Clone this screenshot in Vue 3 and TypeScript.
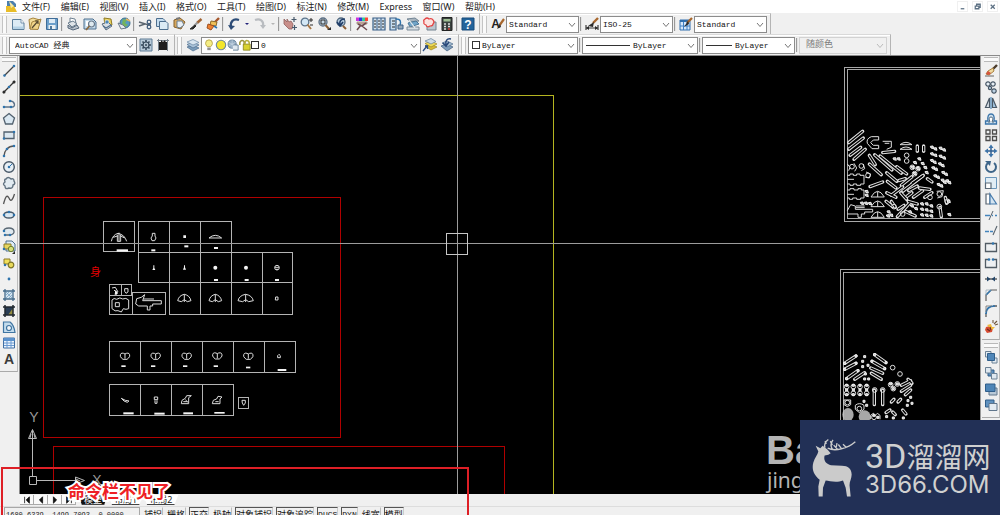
<script setup lang="ts">
type Shape = [d: string, fill: string, stroke?: string, width?: number]
interface Glyph { p: Shape[]; t?: { s: string; x: number; y: number; size: number; fill: string } }
type Seg = [number, number, number, number]

const N = 'none'
const K = '#2b2b2b'
const B = '#2f74ad'
const L = '#c4dcef'
const S = '#4d6e8e'
const G = '#6c7f8f'

const dot = (x: number, y: number, r = 1.3) => `M${x - r} ${y}a${r} ${r} 0 1 0 ${2 * r} 0a${r} ${r} 0 1 0 ${-2 * r} 0z`

const glyphs: Record<string, Glyph> = {
  new: { p: [['M2.5 3.500H11L14 7V13.500H2.500z', '#dcebf5', '#5d7f9c'], ['M11 3.500V7H14', '#fff', '#5d7f9c', 0.8], ['M3 10.500H13.500V13H3z', '#b5d2e6']] },
  open: { p: [['M2 3.500L6 2L13 4L11 13L3 13z', '#f2dc9a', '#a8853a'], ['M5 6L14 3L11 13.500L3 13z', '#f0d48a', '#94722e', 0.8], ['M5 12L11 5M8 5H11V8', N, '#574a31', 1.2]] },
  save: { p: [['M2.500 2.500H13.500V13.500H2.500z', '#6b9fcb', '#3f6d98'], ['M5 3H11V7H5z', '#dceaf5'], ['M4.500 9H11.500V13H4.500z', '#e9eff3'], ['M6 10H8V13H6z', '#4d789d']] },
  plot: { p: [['M5 2L10 3L11 7L5 6z', '#fff', G], ['M3 7L8 5L12 8L7 11z', '#dfe4e8', G], ['M3 9L7 12L12 9L14 12L8 14L3 12z', '#b8c1ca', '#54667a']] },
  preview: { p: [['M2 3H11L14 6V13H2z', '#c5dced', S], ['M4 5H9V10H4z', '#fff'], ['M9.500 8m-3 0a3 3 0 1 0 6 0a3 3 0 1 0-6 0', '#dfeaf0', '#67788a', 1.2], ['M7.500 10L4 14', N, '#8a6a42', 1.8]] },
  publish: { p: [['M5 2L12 3L13 9L6 10z', '#e9d15b', '#8f7a25'], ['M3 8L9 6L13 10L7 14z', '#d7dde2', '#5b6d7f'], ['M4 10L7 12L12 9', N, '#4c6d8d', 1.2], [dot(8, 6, 2), '#4b85b8', '#fff', 0.5]] },
  web: { p: [[dot(9, 7, 5), '#5599c4', '#40708e'], ['M7 3L11 4L9 7L12 9L9 11L6 8z', '#74b35e'], ['M2 7L7 9L10 12L5 13z', '#e4e9ed', '#6c7988'], ['M10 3L14 5', N, '#eab65d', 1.5]] },
  cut: { p: [['M2 6L10 8.500L14 8M2 10L8 8', N, '#5a6570', 1.4], [dot(12, 6, 1.8), N, '#3c597a', 1.2], [dot(12, 11, 1.8), N, '#3c597a', 1.2]] },
  copy: { p: [['M2.500 2.500H9L11 4.500V10.500H2.500z', L, S], ['M5.500 5.500H12L14 7.500V13.500H5.500z', '#dcebf5', S]] },
  paste: { p: [['M3 4L9 2L14 6L10 13L3 11z', '#d7a75c', '#84602c'], ['M6 5L11 5L13 9L9 12L6 11z', '#e8eff5', '#6b7e90'], ['M5 3L9 2', N, '#777', 2]] },
  brush: { p: [['M13.500 3L9 7', N, '#a06332', 2.4], ['M9.500 6.500L6 10', N, '#999', 2.2], ['M7 9L2 13L5 13L8 10z', K, K]] },
  match: { p: [['M14 2L10 6', N, '#a5562b', 2.4], ['M6 5L12 6L11 10L5 9z', '#f0c058', '#8d6a2a'], ['M3 8L9 10L6 14L2 12z', '#ee8130', '#9d4f20'], ['M9 10L12 12', N, B, 1.6]] },
  undo: { p: [['M13 4C7 2 4 6 5 11', N, '#2d4c77', 2.2], ['M2 9L9 10L5 14z', '#2d4c77']] },
  redo: { p: [['M3 4C8 2 12 5 11 10', N, '#b9bcc0', 2.2], ['M8 9L14 9L11 13z', '#b9bcc0']] },
  pan: { p: [['M2 3L5 6L5 3L7 6L9 5L11 8L10 13L7 13L2 8z', '#c98f8a', '#91605d', 0.8], ['M12 1V6M9.500 3.500H14.500M12.500 9V14M10 11.500H15', N, '#47596b', 1.2]] },
  zoomrt: { p: [[dot(6, 6, 3.8), '#d3e7f5', '#5b738a', 1.3], ['M8.500 8.500L12 13', N, '#a77947', 2], ['M12 2V6M10 4H14M11 9H14', N, K, 1]] },
  zoomwin: { p: [[dot(7, 6, 4), '#c6d9e8', '#5c6f83', 1.3], ['M5 4H9V8H5z', N, K, 1], ['M9.500 9L13 13', N, '#8b5f36', 2], ['M11 14L15 11V14z', K]] },
  zoomprev: { p: [[dot(8, 6, 4), '#b6cbdd', '#51687e', 1.3], ['M10 10L13 13', N, '#8b5f36', 2], ['M12 3C8 3 6 5 7 9M4 6L7 10L10 6', N, '#1f3c68', 1.6]] },
  props: { p: [['M2 1.500H5V5H2z', '#c3d'], ['M5 1.500H8V5H5z', '#33d'], ['M8 1.500H11V5H8z', '#3c9'], ['M11 1.500H14V5H11z', '#f43'], ['M3 6H13V8H3z', '#d6b6a6', '#8c7a6d', 0.7], ['M4 8L8 10L12 7M8 10L13 14M3 14L7 9', N, '#6e4d50', 1.6]] },
  design: { p: [['M2 2H14V14H2z', '#d3e1ec', '#385f87', 1.2], ['M6 2V14M10 2V14', N, '#385f87', 1], ['M11 5H13M11 8H13M11 11H13M7 5H9M7 8H9M7 11H9M3 5H5M3 8H5M3 11H5', N, K, 1.2]] },
  palettes: { p: [['M2 2H8V14H2z', '#c7ddef', '#385f87', 1.2], ['M4 5H7M4 8H7M4 11H7', N, K, 1.2], ['M8 3C13 3 13 6 12 9', N, B, 1.4], ['M10 9H15V13H10z', '#94a7b7', '#385f87']] },
  sheets: { p: [['M2 3L10 2L14 5L6 6z', '#a9b4bd', '#728595'], ['M3 7L11 5L14 8L5 11z', '#71a5c9', '#4a7798'], ['M2 11H14V14H2z', '#d5dde3', '#7d8b98'], ['M4 4L10 12', N, '#e6ecef', 1.2]] },
  markup: { p: [['M5 6H14V14H5z', '#bac6cf', '#72818f'], ['M3 3q2-2 4 0q3-1 4 1q2 2 0 4q0 2-3 2q-3 2-4-1q-3-1-2-3q-1-2 1-3z', '#fbe3e0', '#e34242', 1.2]] },
  calc: { p: [['M3 1.500H13V14.500H3z', '#39413e', '#222'], ['M4.500 3H11.500V5.500H4.500z', '#9fbf94'], ['M5 8H7M9 8H11M5 10.500H7M9 10.500H11M5 13H7', N, '#dedede', 1.3], ['M9 13H11', N, '#db3d34', 1.3]] },
  help: { p: [['M2 2H14V14H2z', '#23649b', '#184b7a']], t: { s: '?', x: 8, y: 12.5, size: 12, fill: '#fff' } },
  textstyle: { p: [['M14 3L9 10', N, '#a8672d', 2.2], ['M10 8L7 13L11 11z', K]], t: { s: 'A', x: 5.500, y: 12, size: 12, fill: '#222' } },
  dimstyle: { p: [['M14 2L9 7', N, '#a8672d', 2.4], ['M10 6L4 10L9 11z', K], ['M2 9V14M14 9V14M2 12H14', N, '#3a3a3a', 1.2], ['M2 12L5 10V14zM14 12L11 10V14z', K]] },
  tablestyle: { p: [['M2 4H12V14H2z', '#d5e7fa', '#316fae'], ['M2 4H12V6H2z', '#316fae'], ['M5.500 6V14M9 6V14M2 10H12', N, '#3f80c6', 1], ['M14 2L9 7', N, '#a8672d', 2.3], ['M10 5L6 11L11 8z', K]] },
  gear: { p: [['M2 2H14V14H2z', '#b9cbd9', '#5f7d96', 1], ['M8 3V13M3 8H13M4.500 4.500L11.500 11.500M11.500 4.500L4.500 11.500', N, '#35485a', 1.6], [dot(8, 8, 3), '#b5c5d2', '#35485a', 1.2], [dot(8, 8, 1), '#35485a']] },
  myspace: { p: [['M4 5H12V13H4z', '#1f1f1f'], ['M2 3.500H14M3.500 2V14M12.500 2V14', N, '#77828c', 1], ['M6 6L6 3L8 5L10 3L11 6z', '#1f1f1f']] },
  layers: { p: [['M2 10L8 8L14 11L8 14z', '#7b9dbb', '#4a6c8d', 0.7], ['M2 7.500L8 5L14 8L8 11z', '#a9c2d8', '#4a6c8d', 0.7], ['M2 5L8 2.500L14 5.500L8 8z', '#d9e6f0', '#6b8aa6', 0.7]] },
  current: { p: [['M3 9L9 7L15 10L9 13z', '#d8bc33', '#9a8524', 0.7], ['M3 6.500L9 4L15 7L9 10z', '#efdb57', '#9a8524', 0.7], ['M3 4L9 1.500L14 4.500L9 7z', '#cedbe6', '#667f96', 0.7], ['M1 14L5 9M3 9H5.500V12', N, '#294d84', 1.3]] },
  prevlayer: { p: [['M2 9L8 7L14 10L8 14z', '#7f9dbb', '#3d5c7c', 0.7], ['M3 6L8 4L14 7L8 10z', '#a8bfd3', '#4a6c8d', 0.7], ['M12 2C8 1 6 4 7 8M4 6L7 9L10 5', N, '#29497a', 1.5]] },
  bulb: { p: [['M4 6a4 4 0 1 1 8 0q0 2-2 4H6Q4 8 4 6z', '#f5ed84', '#b3a044'], ['M6 11H10V14H6z', '#929292']] },
  sun: { p: [[dot(8, 8, 5.500), '#f3e62c', '#6f8a9b', 1.3], ['M3 3L4 4M12 12L13 13M13 3L12 4M4 12L3 13', N, '#b7a541', 1]] },
  freeze: { p: [[dot(7, 7, 4.800), '#93abc0', '#627f99'], ['M8 8H14V14H8', '#dfe8ef', '#5e7a92'], ['M7 2V12M3 5L11 9M11 5L3 9', N, '#c8d7e4', 0.8]] },
  lock: { p: [['M2 8V5Q4 1 7 4V9', N, '#9c9640', 1.8], ['M6 7H14V14H6z', '#d9d22e', '#8d8620'], ['M8 7Q8 2 11 3Q13 3 13 7', N, '#b5ad3a', 1.8]] },
  line: { p: [['M3 13L13 3', N, '#444', 1.3], [dot(3.500, 12.500), B], [dot(13, 3), B]] },
  xline: { p: [['M2 14L14 2', N, '#333', 1.300], [dot(3, 13, 1.500), K], [dot(13, 3, 1.500), K], [dot(8, 8), B]] },
  pline: { p: [['M3 12H11C15 12 14 6 9 6', N, '#5b7188', 1.4], [dot(3, 12), B], [dot(10, 12), B], [dot(9, 6), B]] },
  polygon: { p: [['M8 2.500L13.500 7L11.500 13H4.500L2.500 7z', '#dae8f2', '#52616f', 1.3]] },
  rect: { p: [['M3 5H13V11.500H3z', '#dbe7f0', '#52616f', 1.3], [dot(3, 11.500), B], [dot(13, 5), B]] },
  arc: { p: [['M3 13C3 8 7 3 13 3', N, '#555', 1.3], [dot(3, 13), B], [dot(6, 6), B], [dot(13, 3), B]] },
  circle: { p: [[dot(8, 8, 5.300), '#e7eff5', '#495968', 1.4], ['M8 8L11 5', N, B, 1], [dot(8, 8), B]] },
  cloud: { p: [['M5 4q2-3 5 0q3-1 3 2q2 3-1 4q0 4-4 3q-4 2-4-2q-3-2 0-4q-1-3 1-3z', '#e2ebf1', '#60717f', 1.4]] },
  spline: { p: [['M2.500 13C5 4 6 4 8 7C10 12 12 8 13.500 3', N, '#555', 1.3]] },
  ellipse: { p: [['M3 8C3 4 13 4 13 8C13 12 3 12 3 8z', '#d9e7f1', '#4a5b6b', 1.3], [dot(3, 8), B], [dot(13, 8), B], [dot(8, 5), B]] },
  earc: { p: [['M5 12H9C15 11 14 5 8 5C4 5 3 7 3 8', '#e0e9ef', '#5b6974', 1.3], [dot(4, 12), B], [dot(9, 12), B], [dot(3, 8), B]] },
  insert: { p: [['M5 2H11L14 5V12H5z', '#dcebf5', S], ['M3 5H10V10H3z', '#e7d65e', '#8a7b26'], [dot(10, 10, 2.700), '#d5df78', '#6d7f30'], ['M14 15L11 15L14 12z', K], [dot(3, 10), B]] },
  block: { p: [['M3 4H9V9H3z', '#f0df5a', '#8a7b26'], [dot(10, 10, 2.800), '#e8d95a', '#7c7529', 1.2], [dot(4, 10), B]] },
  point: { p: [[dot(8, 8, 1.400), B]] },
  hatch: { p: [['M4 4H12V12H4z', '#d5e4ef'], ['M4 2V14M12 2V14M2 4H14M2 12H14', N, '#456c8c', 1.3], ['M5 11L11 5M5 8L8 5M8 11L11 8M5 5L11 11', N, '#74a1c4', 0.800]] },
  gradient: { p: [['M4 4H12V12H4z', '#293d55'], ['M7 12L12 5V12z', '#938c40'], ['M4 2V14M12 2V14M2 4H14M2 12H14', N, '#20282f', 1.5]] },
  region: { p: [['M2.500 13.500V3H9Q13 6 14 13.500z', '#c3dced', '#3f75a2', 1.2], [dot(8, 9, 2.500), '#f0f5f9', '#3f75a2', 1.2]] },
  table: { p: [['M2.500 3H13.500V13H2.500z', '#edf5fd', '#416fa3'], ['M2.500 3H13.500V6H2.500z', '#5b92cd'], ['M6 6V13M10 6V13M3 8H13M3 10.500H13', N, '#6a9ad2', 1]] },
  mtext: { p: [], t: { s: 'A', x: 8, y: 13, size: 14, fill: '#3b3b3b' } },
  erase: { p: [['M2 13H11', N, '#666', 1], ['M14 2L10 6', N, '#4a3b2a', 2.400], ['M10 5L5 8L3 11L6 12L11 8z', '#f0d9a0', '#a8803d'], ['M5 8L8 10L6 12L3 11z', '#d6533d']] },
  copyobj: { p: [[dot(5, 5, 2.200), '#e6eef4', '#445362', 1.200], [dot(10, 5, 2.200), '#e6eef4', '#445362', 1.200], [dot(11, 12, 2.200), '#bcd2e4', '#445362', 1.200], [dot(7, 9, 1.600), '#bcd2e4', '#445362', 1.200]] },
  mirror: { p: [['M6.500 3V12.500H2.500z', '#dbe3e9', '#4b5966', 1.200], ['M9.500 3V12.500H13.500z', '#a7c9e4', '#4b5966', 1.200], ['M8 2V14', N, B, 1]] },
  offset: { p: [['M2.500 13V10H5Q4 3 8 3Q12 3 11 10H13.500V13z', '#cfe1ef', '#3a74a9', 1.300], ['M5 11H7Q5 6 8 6Q11 6 9 11H11', '#fff', '#53697d', 1]] },
  array: { p: [['M3 3H7V7H3zM9.500 3H13.500V7H9.500zM3 9.500H7V13.500H3zM9.500 9.500H13.500V13.500H9.500z', '#eef1f3', '#4c4c4c', 1.300]] },
  move: { p: [['M8 3V13M3 8H13', N, '#315f91', 1.500], ['M8 1.500L10.500 5H5.500zM8 14.500L10.500 11H5.500zM1.500 8L5 5.500V10.500zM14.500 8L11 5.500V10.500z', '#3d73a8']] },
  rotate: { p: [['M5 4A5 5 0 1 0 11 4', N, '#3e6589', 2], ['M2 2L8 2L7 7z', '#3e6589']] },
  scale: { p: [['M2.500 2.500H13.500V13.500H2.500z', '#e1edf5', '#6a96bb'], ['M2.500 8H8V13.500H2.500z', '#fff', '#5b6a78', 1.200]] },
  stretch: { p: [['M3 3H7V13H3z', '#fff', '#5a6672', 1.200], ['M7 3L13.500 13H7z', '#d4e4f1', '#487cad', 1.200]] },
  trim: { p: [['M2 8.500H7M9 8.500H10M12 8.500H14', N, '#4485bd', 1.300], ['M6 13L10 4', N, '#59646e', 1]] },
  extend: { p: [['M2 8.500H6M7 8.500H10', N, '#4485bd', 1.300], ['M10 12L14 3', N, '#59646e', 1.100]] },
  breakpt: { p: [['M2.500 4.500H13.500V12.500H2.500z', '#eef0f2', '#525c65', 1.300], [dot(10, 4.500), B]] },
  break: { p: [['M5.500 4.500H2.500V12.500H13.500V4.500H10.500', '#eef0f2', '#525c65', 1.300], [dot(6, 4.500), B], [dot(10, 4.500), B]] },
  join: { p: [['M2 8H14', N, '#404040', 1.200], ['M4 5.500L7.500 8L4 10.500zM12 5.500L8.500 8L12 10.500z', '#264769']] },
  chamfer: { p: [['M3 14V8L8 3H14', N, '#5b5b5b', 1.200], ['M3 8L8 3', N, B, 1.500], ['M3 8V3H8', N, '#9aa8b4', 0.800]] },
  fillet: { p: [['M3 14V10M10 3H14', N, '#5b5b5b', 1.300], ['M3 11Q3 3 12 3', N, B, 1.700], ['M3 9V3H9', N, '#777', 0.900]] },
  explode: { p: [['M3 8L7 7L10 9L9 13L4 14L2 11z', '#d84b31'], ['M4 6L8 5L9 8L12 8L9 11z', '#f0ba3c'], ['M11 5L14 2M12 6L15 5M10 4L10 1', N, '#71583f', 1.100], ['M4 10L7 12M7 8L8 11', N, '#702a22', 1.200]] },
  front: { p: [['M2.500 2.500H8V8H2.500z', '#e3ebf2', '#6b8195'], ['M9 9H14V14H9z', '#e3ebf2', '#6b8195'], ['M4.500 4.500H11.500V11.500H4.500z', '#4f86b8', '#305e8a']] },
  back: { p: [['M5 5H11V11H5z', '#5c8ebd', '#305e8a'], ['M2.500 2.500H8V8H2.500z', '#dfe8f0', '#6b8195'], ['M8.500 8.500H14V14H8.500z', '#dfe8f0', '#6b8195']] },
  above: { p: [['M6 7H14V14H6z', '#b9c9d7', '#60768c'], ['M2.500 3H12V10.500H2.500z', '#4e85b7', '#305e8a']] },
  below: { p: [['M2.500 3H11V10H2.500z', '#5f91bf', '#305e8a'], ['M6 6.500H14V13.500H6z', '#e4ecf3', '#60768c']] }
}

const menus = ['文件(F)', '编辑(E)', '视图(V)', '插入(I)', '格式(O)', '工具(T)', '绘图(D)', '标注(N)', '修改(M)', 'Express', '窗口(W)', '帮助(H)']
const standard = [
  'new|新建', 'open|打开', 'save|保存', '-', 'plot|打印', 'preview|打印预览', 'publish|发布', 'web|3DDWF', '-',
  'cut|剪切', 'copy|复制', 'paste|粘贴', 'brush|特性匹配', 'match|块编辑器', '-', 'undo|放弃', 'v|放弃列表', 'redo|重做', 'w|重做列表', '-',
  'pan|实时平移', 'zoomrt|实时缩放', 'zoomwin|窗口缩放', 'zoomprev|缩放上一个', '-', 'props|特性', 'design|设计中心', 'palettes|工具选项板', 'sheets|图纸集', 'markup|标记集', 'calc|计算器', '-', 'help|帮助'
].map(s => { const [icon, label] = s.split('|'); return { icon, label } })
const styles = [
  { icon: 'textstyle', label: '文字样式', value: 'Standard' },
  { icon: 'dimstyle', label: '标注样式', value: 'ISO-25' },
  { icon: 'tablestyle', label: '表格样式', value: 'Standard' }
]
const layerState = ['bulb', 'sun', 'freeze', 'lock']
const toItems = (s: string) => s.split(' ').map(p => { const [icon, label] = p.split('|'); return { icon, label } })
const draw = toItems('line|直线 xline|构造线 pline|多段线 polygon|多边形 rect|矩形 arc|圆弧 circle|圆 cloud|修订云线 spline|样条曲线 ellipse|椭圆 earc|椭圆弧 insert|插入块 block|创建块 point|点 hatch|图案填充 gradient|渐变色 region|面域 table|表格 mtext|多行文字')
const modify = toItems('erase|删除 copyobj|复制 mirror|镜像 offset|偏移 array|阵列 move|移动 rotate|旋转 scale|缩放 stretch|拉伸 trim|修剪 extend|延伸 breakpt|打断于点 break|打断 join|合并 chamfer|倒角 fillet|圆角 explode|分解')
const order = toItems('front|前置 back|后置 above|置于对象之上 below|置于对象之下')
const nav = [
  { label: '第一个', d: 'M3 1V9M9 1L5 5L9 9z' },
  { label: '上一个', d: 'M8 1L4 5L8 9z' },
  { label: '下一个', d: 'M4 1L8 5L4 9z' },
  { label: '最后一个', d: 'M3 1L7 5L3 9zM9 1V9' }
]
const tabs = ['模型', '布局1', '布局2']
const modes = [
  { t: '捕捉', on: false }, { t: '栅格', on: false }, { t: '正交', on: true }, { t: '极轴', on: false }, { t: '对象捕捉', on: true },
  { t: '对象追踪', on: true }, { t: 'DUCS', on: true }, { t: 'DYN', on: true }, { t: '线宽', on: false }, { t: '模型', on: true }
]

const sheets: Seg[] = [
  [103, 221, 31, 30], [138, 221, 31, 31], [169, 221, 31, 31], [200, 221, 31, 31],
  [138, 252, 31, 30], [169, 252, 31, 30], [200, 252, 31, 30], [231, 252, 31, 30], [262, 252, 30, 30],
  [169, 282, 31, 32], [200, 282, 31, 32], [231, 282, 31, 32], [262, 282, 30, 32],
  [109, 284, 12, 11], [121, 284, 10, 11], [109, 295, 23, 19], [132, 292, 33, 22],
  [109, 341, 31, 31], [140, 341, 31, 31], [171, 341, 31, 31], [202, 341, 31, 31], [233, 341, 31, 31], [264, 341, 31, 31],
  [109, 384, 31, 31], [140, 384, 31, 31], [171, 384, 31, 31], [202, 384, 31, 31], [238, 397, 10, 11]
]
const fans = [[283, 265, 20], [376, 265, 19], [467, 265, 23]]
const masks = [[105, 94], [197, 94], [290, 94], [382, 93], [475, 94]]
const labelsTop: Seg[] = [[80, 118, 34, 7], [184, 118, 12, 6], [283, 106, 12, 6], [372, 111, 12, 6], [372, 207, 12, 6], [464, 207, 12, 6], [555, 207, 12, 6]]
const labelsLow: Seg[] = [[94, 121, 13, 5], [183, 121, 13, 5], [279, 121, 13, 5], [371, 121, 13, 5], [468, 125, 13, 5], [563, 132, 26, 6], [100, 262, 31, 6], [193, 263, 31, 6], [280, 262, 29, 6], [373, 261, 31, 5]]

const rodsA: Seg[] = [
  [56, 248, 98, 214], [56, 268, 100, 234], [60, 286, 92, 262], [72, 298, 106, 268], [118, 286, 136, 314], [134, 284, 186, 330], [118, 312, 154, 344], [150, 288, 214, 340],
  [170, 338, 200, 364], [200, 320, 230, 342], [158, 278, 194, 274], [172, 364, 198, 384], [214, 376, 246, 350], [218, 394, 280, 346], [246, 370, 278, 348],
  [120, 380, 158, 366], [184, 406, 218, 380], [202, 470, 240, 428], [184, 424, 196, 442], [212, 398, 230, 418], [234, 424, 262, 432], [226, 454, 256, 468],
  [250, 412, 278, 392], [268, 384, 300, 388], [284, 412, 306, 398], [262, 258, 262, 274], [281, 258, 281, 274], [292, 356, 306, 366], [330, 442, 334, 470], [346, 412, 350, 430],
  [170, 398, 198, 412], [206, 362, 226, 356], [236, 392, 262, 378], [168, 424, 188, 440], [230, 410, 246, 398], [204, 448, 222, 436]
]
const blobsA = [
  [306, 262], [316, 267], [332, 265], [342, 270], [306, 282], [316, 286], [332, 289], [342, 294], [306, 302], [314, 307], [330, 312], [338, 317],
  [310, 324], [318, 328], [340, 338], [348, 343], [316, 348], [324, 352], [338, 361], [344, 367], [352, 363], [358, 368], [326, 374], [334, 378],
  [194, 297], [206, 297], [255, 308], [268, 297], [247, 322], [264, 326], [278, 311], [286, 323], [254, 341], [290, 338],
  [276, 432], [290, 432], [304, 438], [276, 448], [290, 450], [304, 454], [276, 465], [290, 466], [304, 468], [246, 438], [258, 446], [240, 456],
  [96, 430], [108, 430], [120, 431], [176, 456], [184, 466], [174, 468], [110, 395], [110, 406], [358, 464], [356, 424]
]
const ringsA = [[230, 286], [230, 303], [66, 320], [94, 318], [114, 346], [192, 440], [328, 402], [328, 440], [352, 424], [300, 412], [247, 322], [264, 326], [254, 341], [218, 462]]
const bowsA = [[143, 405], [143, 434], [143, 466]]
const rodsB: Seg[] = [
  [44, 910, 78, 888], [44, 928, 78, 910], [50, 956, 84, 932], [74, 958, 104, 938], [134, 884, 168, 908], [126, 904, 164, 926], [122, 924, 158, 940], [124, 940, 154, 958],
  [133, 990, 133, 1034], [158, 990, 158, 1034], [214, 976, 242, 962], [214, 994, 242, 976], [226, 1004, 242, 990], [168, 1058, 180, 1050], [184, 1026, 192, 1018], [204, 1026, 212, 1018],
  [188, 1056, 196, 1064], [218, 1050, 228, 1062], [234, 958, 246, 970]
]
const blobsB = [
  [98, 904], [104, 890], [98, 920], [114, 916], [106, 942], [104, 957], [116, 957], [182, 972], [190, 986], [202, 972], [242, 1012], [234, 1022], [246, 1030], [232, 1036],
  [50, 976], [50, 990], [50, 1004], [70, 976], [70, 990], [70, 1004], [90, 976], [90, 990], [90, 1004], [110, 976], [110, 990], [110, 1004], [102, 1024], [110, 1036], [170, 1070], [190, 1074], [220, 1074], [132, 1066], [144, 1072],
  [44, 910], [78, 888], [44, 928], [78, 910], [50, 956], [84, 932], [134, 884], [168, 908], [126, 904], [164, 926]
]
const ringsB = [[188, 923], [210, 942], [52, 1028], [88, 1046], [182, 974], [202, 972], [190, 986], [134, 990], [158, 990], [132, 1072], [50, 980], [70, 980], [90, 980], [110, 980], [50, 1000], [70, 1000], [90, 1000], [110, 1000]]
const rod = ([a, b, c, d]: Seg) => `M${a} ${b}L${c} ${d}`
const fan = ([x, y, r]: number[]) => `M${x - r} ${y + 7}Q${x - r + 4} ${y - 9} ${x} ${y - 12}Q${x + r - 4} ${y - 9} ${x + r} ${y + 7}L${x + 9} ${y + 10}L${x} ${y + 4}L${x - 9} ${y + 10}zM${x} ${y - 12}V${y + 11}`
const mask = ([x, y]: number[]) => `M${x - 4} ${y - 9}Q${x - 15} ${y - 12} ${x - 14} ${y}Q${x - 11} ${y + 6} ${x - 6} ${y + 9}H${x + 6}Q${x + 11} ${y + 6} ${x + 14} ${y}Q${x + 15} ${y - 12} ${x + 4} ${y - 9}L${x} ${y - 7}zM${x} ${y - 7}V${y + 7}`
</script>

<template>
  <div class="app">
    <header class="menubar">
      <svg class="logo" viewBox="0 0 11 12"><path d="M1 0H7L10 3V6H1z" fill="#4b7fae" /><path d="M0 5L8 5L11 11H0z" fill="#e9bd28" /><path d="M3 0L8 5L5 7z" fill="#f5e9a2" /></svg>
      <nav><button v-for="m in menus" :key="m" type="button">{{ m }}</button></nav>
      <div class="win">
        <button type="button" aria-label="最小化"><svg viewBox="0 0 10 10"><path d="M3 7.500H7" /></svg></button>
        <button type="button" aria-label="还原"><svg viewBox="0 0 10 10"><path d="M4 4V2.500H8V6H6.500M2.500 4.500H6.500V7.500H2.500z" /></svg></button>
        <button type="button" aria-label="关闭"><svg viewBox="0 0 10 10"><path d="M3 3L7.500 7.500M7.500 3L3 7.500" /></svg></button>
      </div>
    </header>

    <div class="row">
      <div class="panel">
        <i class="grip"></i>
        <template v-for="(it, i) in standard" :key="i">
          <i v-if="it.icon === '-'" class="sep"></i>
          <button v-else-if="it.icon === 'v' || it.icon === 'w'" type="button" class="caret" :class="{ off: it.icon === 'w' }" :aria-label="it.label"></button>
          <button v-else type="button" class="tool" :aria-label="it.label">
            <svg viewBox="0 0 16 16">
              <path v-for="(p, j) in glyphs[it.icon].p" :key="j" :d="p[0]" :fill="p[1]" :stroke="p[2]" :stroke-width="p[3]" />
              <text v-if="glyphs[it.icon].t" :x="glyphs[it.icon].t!.x" :y="glyphs[it.icon].t!.y" :font-size="glyphs[it.icon].t!.size" :fill="glyphs[it.icon].t!.fill">{{ glyphs[it.icon].t!.s }}</text>
            </svg>
          </button>
        </template>
      </div>
      <div class="panel">
        <i class="grip"></i>
        <template v-for="(st, i) in styles" :key="i">
          <i v-if="i" class="sep"></i>
          <button type="button" class="tool" :aria-label="st.label">
            <svg viewBox="0 0 16 16">
              <path v-for="(p, j) in glyphs[st.icon].p" :key="j" :d="p[0]" :fill="p[1]" :stroke="p[2]" :stroke-width="p[3]" />
              <text v-if="glyphs[st.icon].t" :x="glyphs[st.icon].t!.x" :y="glyphs[st.icon].t!.y" :font-size="glyphs[st.icon].t!.size" :fill="glyphs[st.icon].t!.fill">{{ glyphs[st.icon].t!.s }}</text>
            </svg>
          </button>
          <label class="combo w-style"><select :aria-label="st.label"><option>{{ st.value }}</option></select><svg class="chev" viewBox="0 0 8 6"><path d="M1 1L4 4.500L7 1" /></svg></label>
        </template>
      </div>
    </div>

    <div class="row">
      <div class="panel">
        <i class="grip"></i>
        <label class="combo w-space"><select aria-label="工作空间"><option>AutoCAD 经典</option></select><svg class="chev" viewBox="0 0 8 6"><path d="M1 1L4 4.500L7 1" /></svg></label>
        <button v-for="g in ['gear', 'myspace']" :key="g" type="button" class="tool" aria-label="工作空间设置"><svg viewBox="0 0 16 16"><path v-for="(p, j) in glyphs[g].p" :key="j" :d="p[0]" :fill="p[1]" :stroke="p[2]" :stroke-width="p[3]" /></svg></button>
      </div>
      <div class="panel">
        <i class="grip"></i>
        <button type="button" class="tool" aria-label="图层特性管理器"><svg viewBox="0 0 16 16"><path v-for="(p, j) in glyphs.layers.p" :key="j" :d="p[0]" :fill="p[1]" :stroke="p[2]" :stroke-width="p[3]" /></svg></button>
        <label class="combo w-layer">
          <svg v-for="g in layerState" :key="g" class="state" viewBox="1 1 14 14"><path v-for="(p, j) in glyphs[g].p" :key="j" :d="p[0]" :fill="p[1]" :stroke="p[2]" :stroke-width="p[3]" /></svg>
          <i class="swatch"></i>
          <select aria-label="图层"><option>0</option></select><svg class="chev" viewBox="0 0 8 6"><path d="M1 1L4 4.500L7 1" /></svg>
        </label>
        <button v-for="g in ['current', 'prevlayer']" :key="g" type="button" class="tool" aria-label="图层工具"><svg viewBox="0 0 16 16"><path v-for="(p, j) in glyphs[g].p" :key="j" :d="p[0]" :fill="p[1]" :stroke="p[2]" :stroke-width="p[3]" /></svg></button>
      </div>
      <div class="panel">
        <i class="grip"></i>
        <label class="combo w-color"><i class="swatch lead"></i><select aria-label="颜色"><option>ByLayer</option></select><svg class="chev" viewBox="0 0 8 6"><path d="M1 1L4 4.500L7 1" /></svg></label>
        <i class="sep"></i>
        <label class="combo w-ltype"><i class="rule long"></i><select aria-label="线型"><option>ByLayer</option></select><svg class="chev" viewBox="0 0 8 6"><path d="M1 1L4 4.500L7 1" /></svg></label>
        <i class="sep"></i>
        <label class="combo w-lweight"><i class="rule"></i><select aria-label="线宽"><option>ByLayer</option></select><svg class="chev" viewBox="0 0 8 6"><path d="M1 1L4 4.500L7 1" /></svg></label>
        <i class="sep"></i>
        <label class="combo w-plot off"><select aria-label="打印样式" disabled><option>随颜色</option></select><svg class="chev" viewBox="0 0 8 6"><path d="M1 1L4 4.500L7 1" /></svg></label>
      </div>
    </div>

    <main class="work">
      <aside class="side">
        <div class="dock">
          <i class="hgrip"></i>
          <button v-for="it in draw" :key="it.icon" type="button" class="tool" :aria-label="it.label">
            <svg viewBox="0 0 16 16">
              <path v-for="(p, j) in glyphs[it.icon].p" :key="j" :d="p[0]" :fill="p[1]" :stroke="p[2]" :stroke-width="p[3]" />
              <text v-if="glyphs[it.icon].t" :x="glyphs[it.icon].t!.x" :y="glyphs[it.icon].t!.y" :font-size="glyphs[it.icon].t!.size" :fill="glyphs[it.icon].t!.fill">{{ glyphs[it.icon].t!.s }}</text>
            </svg>
          </button>
        </div>
      </aside>

      <section class="canvas">
        <svg viewBox="20 56 960 438" preserveAspectRatio="xMinYMin slice">
          <g fill="none" shape-rendering="crispEdges">
            <path d="M20 95.500H553.500V494" stroke="#b4b420" />
            <path d="M43.500 197.500H340.500V437.500H43.500zM53.500 494V446.500H504.500V494" stroke="#b00000" />
            <g stroke="#b4b4b4"><rect v-for="(r, i) in sheets" :key="i" :x="r[0] + 0.5" :y="r[1] + 0.5" :width="r[2]" :height="r[3]" /></g>
            <path d="M980 67.500H844.500V221.500H980M980 69.500H847.500V218.500H980M980 269.500H840.500V494M980 272.500H843.500V494" stroke="#a8a8a8" />
          </g>
          <text x="90" y="276" class="body-tag">身</text>

          <g transform="translate(90 210) scale(.3333)" class="art">
            <path d="M64 94Q68 74 84 70Q104 74 110 94M70 82L82 78M92 78L104 84M82 74V94H92V74M87 68V94" />
            <path d="M187 70H195V78L198 84L194 92H186L183 84L187 78zM357 84Q376 68 395 84z" />
            <path d="M280 76H288V84H280zM190 166V174L187 180H196L193 174V166M282 166V172L279 179H288L285 172V166" class="solid" />
            <circle cx="376" cy="173" r="6" class="solid" /><circle cx="468" cy="173" r="6" class="solid" /><circle cx="561" cy="173" r="7" /><path d="M555 172H567M558 178H564M557 261H564V270H556z" />
            <path v-for="(f, i) in fans" :key="i" :d="fan(f)" />
            <path d="M66 270Q72 262 80 268Q90 260 98 267Q108 262 116 270V296Q108 300 100 296L94 306L84 302Q76 306 66 296zM76 278H88V290H76zM66 234L76 232L84 246M72 240L82 250M104 236H114V246L108 250L104 244z" />
            <path d="M137 282L140 266L154 262L164 254L158 272H214V282H188V288H180V300H172V288H146zM160 267H192" />
            <path d="M76 240L84 248L80 254L74 254z" class="solid" />
            <rect v-for="(r, i) in labelsTop" :key="'l' + i" :x="r[0]" :y="r[1]" :width="r[2]" :height="r[3]" class="solid" />
          </g>
          <g transform="translate(90 325) scale(.3333)" class="art">
            <path v-for="(m, i) in masks" :key="i" :d="mask(m)" />
            <path d="M563 98V92L567 88L571 92V98zM94 220L106 226L117 228L112 232L102 228zM193 216H203V224H193zM195 226V235H201V226" />
            <path d="M274 236L276 226L286 220L290 212H304L296 218V236zM280 230H292M286 224L294 232M367 236L370 226L380 222L384 214L396 216L390 222V236zM376 230H386M456 226H466V234L461 241L457 234z" />
            <rect v-for="(r, i) in labelsLow" :key="'l' + i" :x="r[0]" :y="r[1]" :width="r[2]" :height="r[3]" class="solid" />
          </g>

          <g transform="translate(830 60) scale(.3333)" class="art">
            <path v-for="(r, i) in rodsA" :key="'o' + i" :d="rod(r)" class="rod" />
            <path v-for="(r, i) in rodsA" :key="'i' + i" :d="rod(r)" class="bore" />
            <path v-for="(r, i) in rodsB" :key="'p' + i" :d="rod(r)" class="rod" />
            <path v-for="(r, i) in rodsB" :key="'q' + i" :d="rod(r)" class="bore" />
            <circle v-for="(c, i) in ringsA" :key="'r' + i" :cx="c[0]" :cy="c[1]" r="7" />
            <circle v-for="(c, i) in ringsB" :key="'s' + i" :cx="c[0]" :cy="c[1]" r="7" />
            <path v-for="(c, i) in blobsA" :key="'b' + i" :d="`M${c[0] - 5} ${c[1] - 3}L${c[0] + 3} ${c[1] - 4}L${c[0] + 5} ${c[1] + 4}L${c[0] - 3} ${c[1] + 2}z`" class="blob" />
            <path v-for="(c, i) in blobsB" :key="'c' + i" :d="`M${c[0] - 3} ${c[1] - 3}H${c[0] + 3}V${c[1] + 3}H${c[0] - 3}z`" class="blob" />
            <path v-for="(c, i) in bowsA" :key="'w' + i" :d="`M${c[0] - 20} ${c[1] + 6}Q${c[0]} ${c[1] - 28} ${c[0] + 20} ${c[1] + 6}zM${c[0]} ${c[1] - 10}V${c[1] + 6}`" />
            <path d="M146 230H124Q108 236 112 250L126 266H146V256H130L122 248L130 240H146zM158 244H184V262L170 268M164 250H178M210 254Q228 240 246 254zM210 268Q228 254 246 268z" />
            <path d="M52 346H60V342H70V346H80V342H90V346H102V372H92V376H80V372H70V376H60V372H52M52 358H72M52 390H60V386H72V390H84V386H94V390H102V414H92V418H80V414H68V418H58V414H52M52 403H72" />
            <path d="M52 452L62 434L76 438V448H128V456H104V462H94V472H84V462H52M78 438H104M78 443H104" />
            <path d="M52 312L60 322L56 332M72 310L80 324L74 334M100 312L104 326L94 332M108 336L122 342L118 354L106 352M320 394L340 392L336 410L322 414" />
            <path d="M42 1020H62V1034L52 1040L42 1034zM76 1036Q88 1026 102 1036V1048L88 1058L76 1048zM122 1078V1066L130 1060L136 1066L142 1060L150 1066V1078" />
            <ellipse cx="54" cy="1064" rx="17" ry="20" class="paw" /><ellipse cx="104" cy="1070" rx="18" ry="19" class="paw" />
          </g>

          <g fill="none" stroke="#b8b8b8" class="ucs">
            <path d="M29.500 476.500H36.500V484.500H29.500zM32.500 476V438M37 480.500H75M32.500 429.500L28.500 438.500H36.500zM32.500 430V438M31 434L30 438M34 434L35 438M75.500 477V484L84.500 480.500zM76 479L80 481" />
            <text x="34" y="422">Y</text><text x="97" y="485">X</text>
          </g>
          <g fill="none" stroke="#9c9c9c" shape-rendering="crispEdges"><path d="M457.500 56V494M20 243.500H980" /><rect x="446.500" y="233.500" width="21" height="21" stroke="#c6c6c6" /></g>
          <g class="baidu"><text x="766" y="464" class="big">Ba</text><text x="767" y="488" class="small">jing</text></g>
        </svg>
      </section>

      <aside class="side right">
        <div class="dock">
          <i class="hgrip"></i>
          <button v-for="it in modify" :key="it.icon" type="button" class="tool" :aria-label="it.label"><svg viewBox="0 0 16 16"><path v-for="(p, j) in glyphs[it.icon].p" :key="j" :d="p[0]" :fill="p[1]" :stroke="p[2]" :stroke-width="p[3]" /></svg></button>
        </div>
        <div class="dock">
          <i class="hgrip"></i>
          <button v-for="it in order" :key="it.icon" type="button" class="tool" :aria-label="it.label"><svg viewBox="0 0 16 16"><path v-for="(p, j) in glyphs[it.icon].p" :key="j" :d="p[0]" :fill="p[1]" :stroke="p[2]" :stroke-width="p[3]" /></svg></button>
        </div>
      </aside>
    </main>

    <div class="tabs">
      <button v-for="n in nav" :key="n.label" type="button" class="nav" :aria-label="n.label"><svg viewBox="0 0 12 10"><path :d="n.d" /></svg></button>
      <button v-for="(t, i) in tabs" :key="t" type="button" class="tab" :class="{ active: i === 0 }">{{ t }}</button>
    </div>
    <footer class="status">
      <output class="coords">1680.6339, 1499.7093, 0.0000</output>
      <button v-for="(m, i) in modes" :key="i" type="button" :class="{ on: m.on, latin: m.t.startsWith('D') }">{{ m.t }}</button>
    </footer>

    <div class="callout"><strong>命令栏不见了</strong></div>

    <div class="brand">
      <svg viewBox="215 110 135 185">
        <path d="M226 136L240 143L247 136L262 148L271 158L264 163L253 165C249 178 255 190 272 194L305 196C323 196 334 206 334 222C334 236 326 244 328 258L331 288H320L316 262L308 240C290 247 268 242 256 240L248 262L247 288H235L234 258L238 238C222 224 213 208 219 186C223 172 232 164 234 153z" fill="#cbcbcb" />
        <path d="M254 142C250 130 257 122 264 117M258 130L254 122M262 143C284 154 322 144 345 124M276 146C270 136 272 126 278 118M276 134L270 122M292 147L280 134M304 145L294 132M318 141L308 131M288 139L290 128" fill="none" stroke="#cbcbcb" stroke-width="4" />
      </svg>
      <div class="words"><p class="name"><span>3D</span>溜溜网</p><p class="site">3D66.COM</p></div>
    </div>
  </div>
</template>

<style>
body { margin: 0; overflow: hidden; }
</style>

<style scoped>
* { box-sizing: border-box; }
.app { position: relative; display: flex; flex-direction: column; height: 100vh; overflow: hidden; background: #f0f0f0; color: #222; font-family: "Noto Sans", "Noto Sans CJK SC", sans-serif; font-size: 9px; }
button { margin: 0; padding: 0; border: 0; background: none; color: inherit; font: inherit; flex: none; white-space: nowrap; }
svg { display: block; }
.menubar { display: flex; align-items: center; height: 13px; flex: none; background: #fff; padding-left: 6px; }
.logo { width: 11px; height: 12px; margin-right: 5px; }
.menubar nav { display: flex; flex: 0 1 473px; justify-content: space-between; line-height: 12px; }
.win { display: flex; gap: 4px; margin-left: auto; padding-right: 2px; }
.win button { width: 11px; height: 11px; border: 1px solid #f0f0f0; }
.win svg { width: 9px; height: 9px; fill: none; stroke: #5d7184; stroke-width: 1.4; }

.row { display: flex; height: 21px; flex: none; }
.panel { display: flex; align-items: center; padding-right: 3px; border-top: 1px solid #d9d9d9; border-right: 1px solid #b4b4b4; box-shadow: inset 0 1px #fff; }
.grip { flex: none; width: 5px; height: 17px; margin: 0 2px; border: solid #c4c4c4; border-width: 0 1px; background: #fafafa; }
.sep { flex: none; width: 2px; height: 14px; margin: 0 1px; background: #999; border-right: 1px solid #e4e4e4; }
.tool { width: 17px; height: 16px; display: flex; align-items: center; justify-content: center; }
.tool svg { width: 16px; height: 16px; }
.tool text { font-family: "Liberation Sans", sans-serif; font-weight: bold; text-anchor: middle; }
.caret { width: 9px; height: 16px; display: flex; align-items: center; justify-content: center; }
.caret::before { content: ""; border: 2px solid transparent; border-top-color: #23237a; margin-top: 2px; }
.caret.off::before { border-top-color: #b5b5b5; }

.combo { position: relative; flex: none; display: flex; align-items: center; height: 17px; border: 1px solid #8c8c8c; background: #fff; }
.combo select { flex: 1; min-width: 0; height: 15px; padding: 0 12px 0 2px; border: 0; outline: 0; background: transparent; appearance: none; color: #111; font: 8px/15px "Liberation Mono", "Noto Sans CJK SC", monospace; opacity: 1; }
.chev { position: absolute; right: 2px; top: 5px; width: 8px; height: 6px; fill: none; stroke: #777; pointer-events: none; }
.combo.off { border-color: #d2d2d2; background: #f0f0f0; }
.combo.off select { color: #7c7c7c; font-size: 9px; padding-left: 6px; }
.combo.off .chev { stroke: #bbb; }
.w-style { width: 73px; }
.w-space { width: 128px; }
.w-space select { padding-left: 5px; }
.w-layer { width: 220px; padding-left: 1px; }
.w-color { width: 110px; }
.w-ltype { width: 116px; }
.w-ltype select, .w-lweight select { padding-left: 3px; }
.w-lweight { width: 93px; }
.w-plot { width: 88px; }
.state { width: 12px; height: 12px; flex: none; }
.swatch { flex: none; width: 8px; height: 8px; border: 1px solid #333; background: #fff; }
.swatch.lead { margin-left: 3px; }
.rule { flex: none; width: 26px; height: 1px; margin-left: 3px; background: #333; }
.rule.long { width: 44px; }

.work { display: flex; flex: 1; min-height: 0; padding-top: 1px; background: linear-gradient(#8a8a8a 1px, #f0f0f0 1px); }
.side { flex: none; width: 20px; padding-right: 1px; border-right: 1px solid #8a8a8a; }
.side.right { border-right: 0; border-left: 1px solid #999; padding: 0 0 0 1px; }
.dock { display: flex; flex-direction: column; border-right: 1px solid #bdbdbd; border-bottom: 1px solid #aaa; padding-bottom: 4px; }
.dock + .dock { margin-top: 2px; }
.hgrip { height: 5px; margin: 1px 1px 1px 2px; border: solid #b9b9b9; border-width: 1px 0; background: #fafafa; }
.canvas { flex: 1; min-width: 0; background: #000; overflow: hidden; }
.canvas > svg { width: 100%; height: 100%; }
.body-tag { fill: #e00000; font: 11px "Noto Sans CJK SC", sans-serif; }
.art { fill: none; stroke: #dedede; stroke-width: 3; }
.art .solid { fill: #f4f4f4; stroke: none; }
.art .rod { stroke: #e2e2e2; stroke-width: 10; stroke-linecap: round; }
.art .bore { stroke: #000; stroke-width: 4; }
.art .blob { fill: #bbb; stroke: #f4f4f4; stroke-width: 3; }
.art .paw { fill: #c4c4c4; stroke: none; opacity: 0.85; }
.ucs text { font: 14px "Liberation Sans", sans-serif; fill: #999; stroke: none; text-anchor: middle; }
.baidu { fill: #b4b4b4; }
.baidu .big { font: bold 40px "Liberation Sans", sans-serif; }
.baidu .small { font: 21px "Noto Sans", sans-serif; }

.tabs { display: flex; height: 13px; flex: none; padding: 1px 0 2px 20px; border-bottom: 1px solid #ddd; }
.nav { width: 14px; height: 10px; background: #fafafa; border-right: 1px solid #aaa; border-bottom: 1px solid #aaa; display: flex; align-items: center; justify-content: center; }
.nav svg { width: 10px; height: 8px; fill: #111; stroke: #111; }
.tab { height: 10px; padding: 0 6px; border: 0; border-bottom: 1px solid #444; background: #fff; clip-path: polygon(0 0, 100% 0, calc(100% - 4px) 100%, 4px 100%); font-size: 9px; line-height: 9px; }
.tab.active { background: #111; color: #fff; margin-left: 2px; }
.status { display: flex; height: 8px; flex: none; gap: 3px; padding-left: 4px; overflow: hidden; align-items: flex-start; }
.coords { flex: none; width: 136px; height: 16px; padding: 3px 1px; border: 1px solid #a8a8a8; font: 7px/9px "Liberation Mono", monospace; white-space: nowrap; overflow: hidden; }
.status button { height: 16px; border: 1px solid transparent; border-right-color: #bbb; font: 9px/14px "Noto Sans CJK SC", sans-serif; color: #111; }
.status button.latin { font: 8px/14px "Liberation Mono", monospace; }
.status button.on { border-color: #555 #ccc #ccc #555; }

.callout { position: absolute; left: 1px; top: 467px; bottom: -2px; width: 468px; border: 2px solid #de1f26; }
.callout strong { position: absolute; left: 65px; top: 9px; font: bold 17px/26px "Noto Sans CJK SC", sans-serif; color: #ee1f25; -webkit-text-stroke: 4px #fff; paint-order: stroke fill; white-space: nowrap; }

.brand { position: absolute; right: 0; bottom: 0; display: flex; align-items: center; width: 200px; height: 95px; padding-left: 12px; gap: 8px; background: #223056; color: #d0d0d0; }
.brand svg { flex: none; width: 45px; height: 62px; }
.words { white-space: nowrap; }
.words p { margin: 0; }
.name { display: flex; align-items: center; height: 34px; font: 28px/34px "Noto Sans CJK SC", sans-serif; }
.name span { font: 34px/34px Roboto, sans-serif; }
.site { font: 24px/24px Inter, sans-serif; }
</style>
